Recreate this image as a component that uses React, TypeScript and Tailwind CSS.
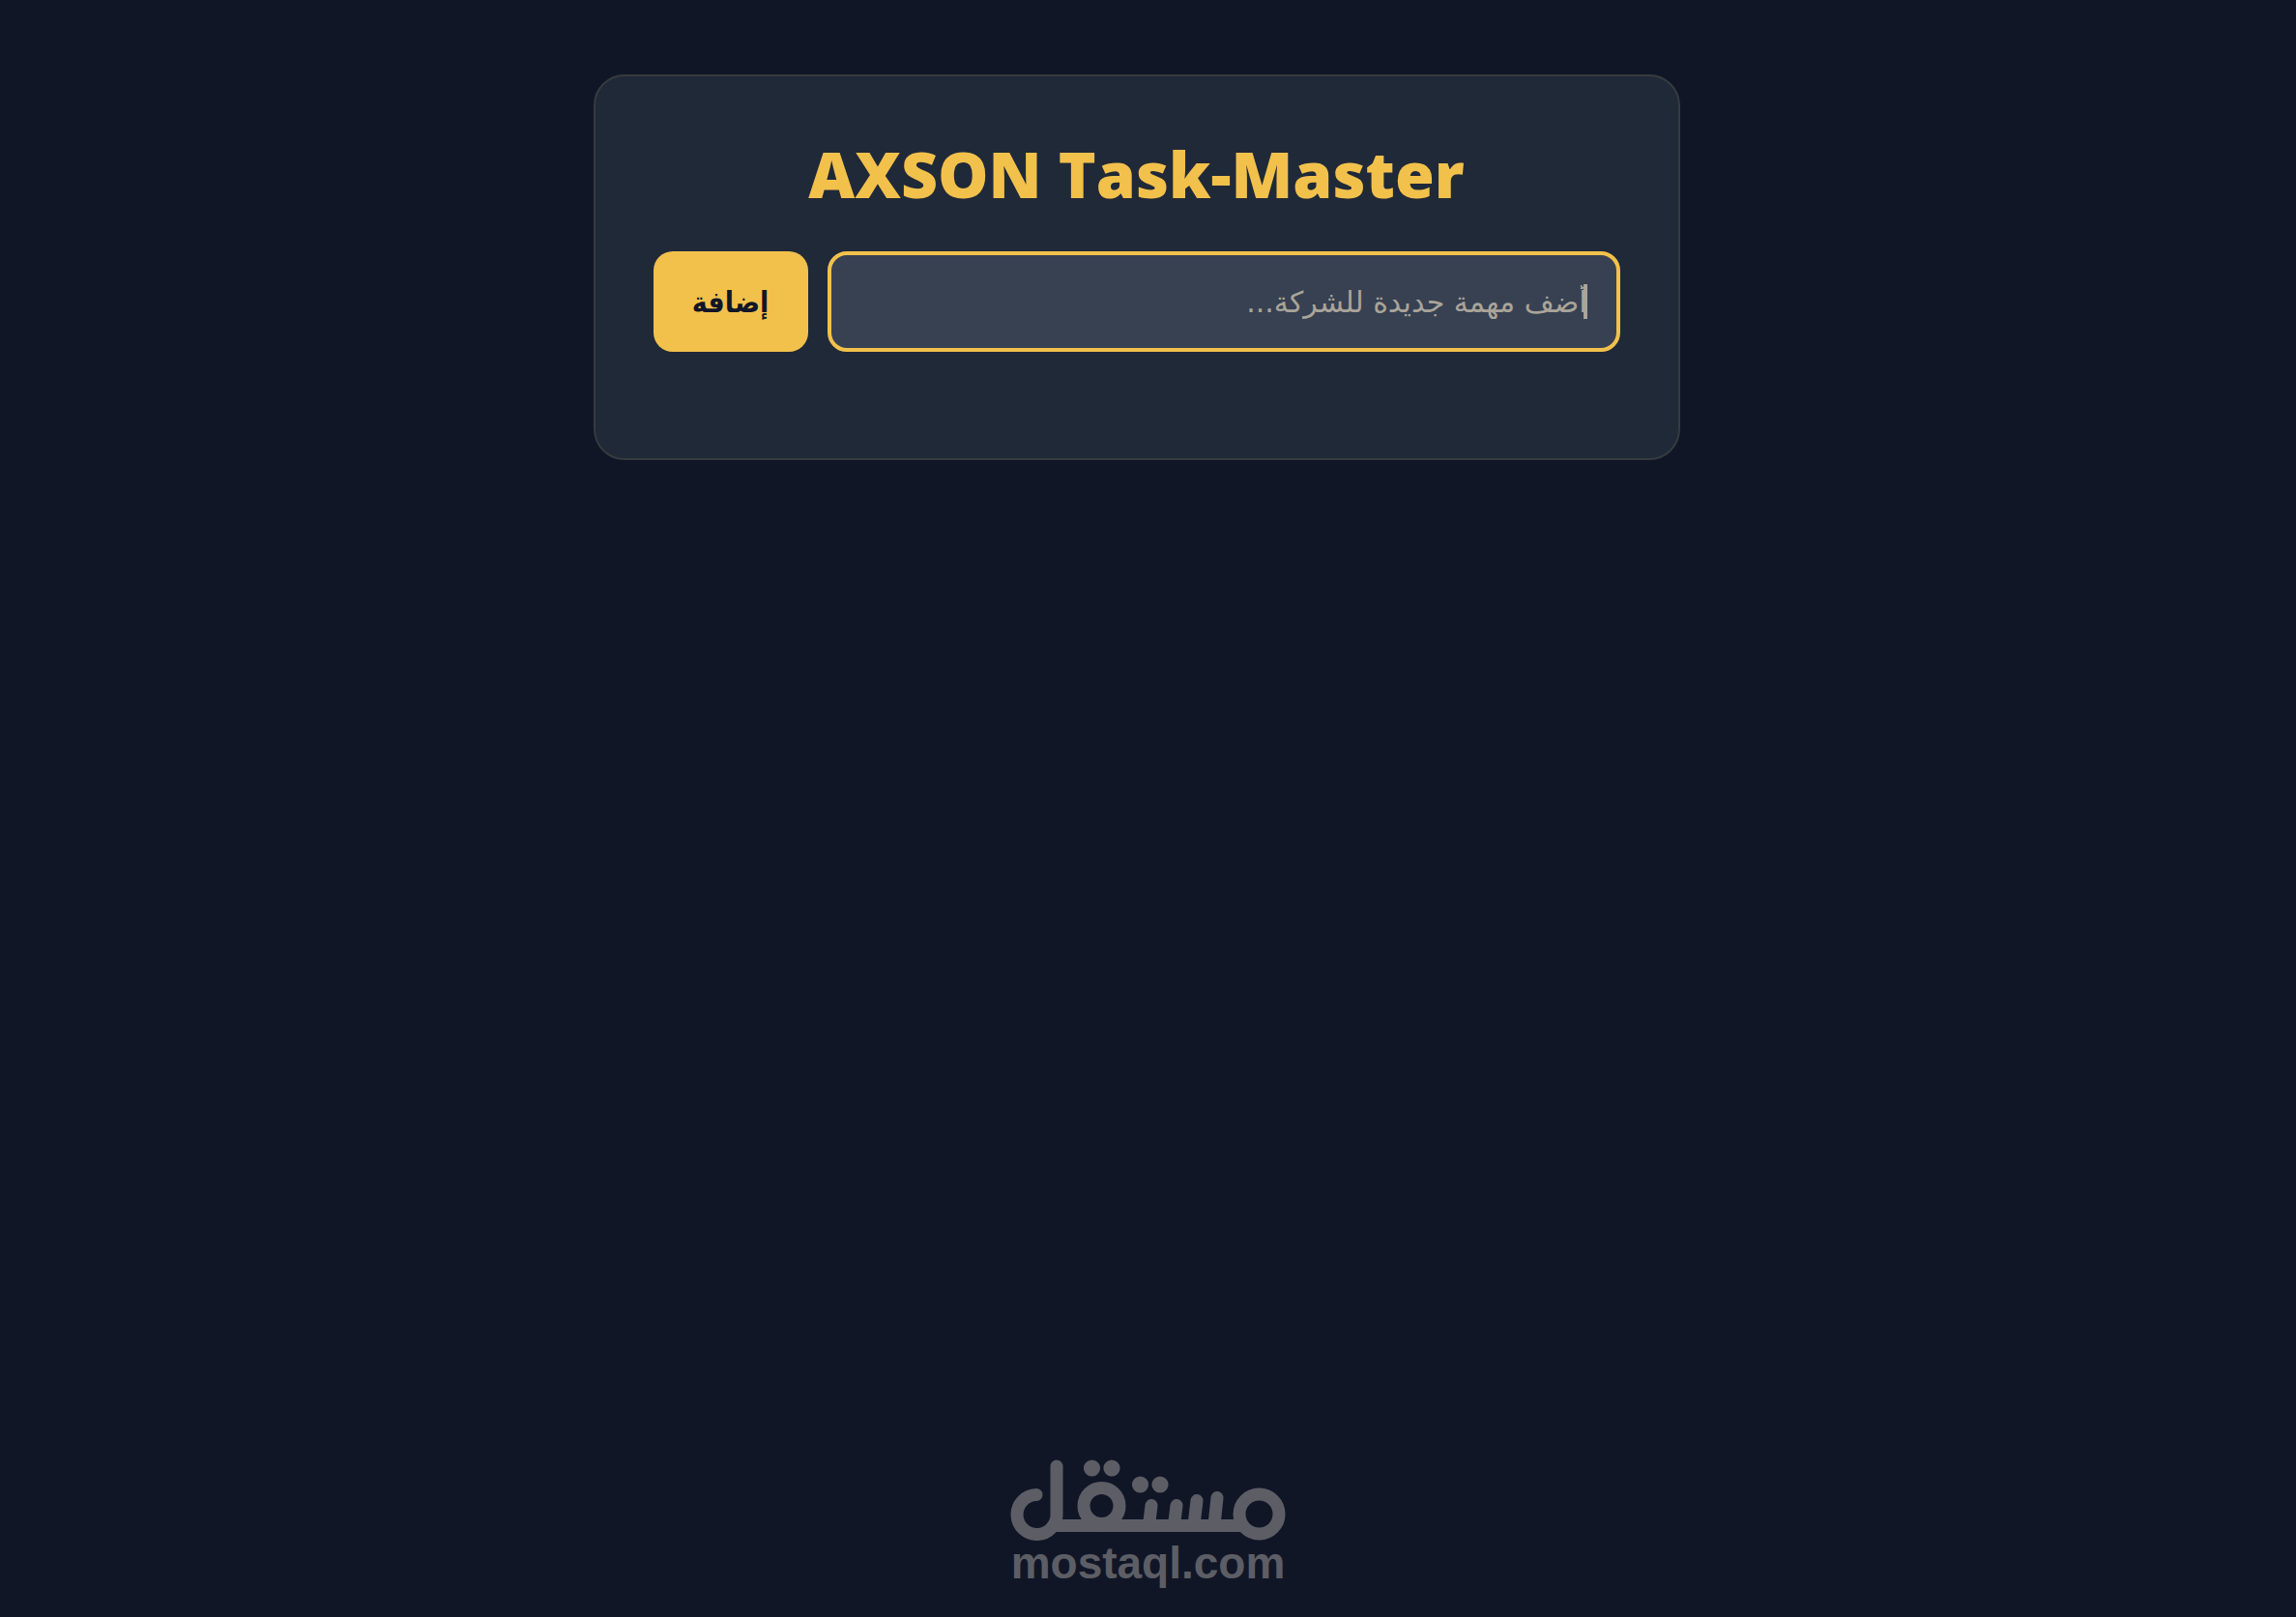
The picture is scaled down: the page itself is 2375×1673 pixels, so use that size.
import { useState } from "react";
import type { FormEvent } from "react";

// mostaql wordmark
function Logo() {
    return (
        <svg width="286" height="86" viewBox="0 0 286 86" fill="none" stroke="currentColor" strokeWidth="13" strokeLinecap="round" aria-hidden="true">
            <path d="M27 36.500A20.500 20.500 0 1 0 48 56V7" />
            <path d="M48 68.500H244" strokeLinecap="butt" />
            <circle cx="94.500" cy="48" r="18.500" />
            <circle cx="257.500" cy="56.500" r="20.500" />
            <path d="M146 47.500L143.500 68M172 47.500L169.500 68M193 42.500L190 68M214 39.500L211 68" />
            <g fill="currentColor" stroke="none">
                <circle cx="84.500" cy="9" r="8.600" />
                <circle cx="105" cy="9" r="8.600" />
                <circle cx="134.500" cy="26" r="8.600" />
                <circle cx="155" cy="26" r="8.600" />
            </g>
        </svg>
    );
}

export default function App() {
    const [tasks, setTasks] = useState<string[]>([]);
    const [text, setText] = useState("");

    const handleSubmit = (e: FormEvent) => {
        e.preventDefault();
        if (!text.trim()) return;
        setTasks([...tasks, text]);
        setText("");
    };

    return (
        <div dir="rtl" className="flex min-h-screen flex-col items-center bg-[#111627] font-['DejaVu_Sans',sans-serif]">
            <div className="flex w-full justify-center pt-[77px] pr-6">
                <main className="w-full max-w-[1124px] rounded-[32px] border-2 border-[#363b3f] bg-[#202938] px-[60px] pt-[60px] pb-[110px]">
                    <h1 dir="ltr" className="mb-10 text-center font-['Open_Sans',sans-serif] text-[66px] leading-[81px] font-extrabold text-[#f2c14c]">
                        AXSON Task-Master
                    </h1>

                    <form onSubmit={handleSubmit} className="flex gap-5">
                        <div className="relative flex-1">
                            <input
                                type="text"
                                aria-label="مهمة جديدة"
                                placeholder="أضف مهمة جديدة للشركة..."
                                value={text}
                                onChange={(e) => setText(e.target.value)}
                                className="h-[104px] w-full rounded-[20px] border-4 border-[#f2c14c] bg-[#374152] px-[30px] text-[30px] text-white outline-none placeholder:text-[#aaa499]"
                            />
                            {!text && <span className="absolute top-[34px] right-[34px] h-9 w-1 bg-[#aaa499]" />}
                        </div>
                        <button type="submit" className="h-[104px] w-[160px] rounded-[20px] bg-[#f2c14c] font-['DejaVu_Sans_Condensed',sans-serif] text-[30px] font-bold text-[#111627]">
                            إضافة
                        </button>
                    </form>

                    {tasks.length > 0 && (
                        <ul className="mt-10 space-y-5 text-[30px] text-white">
                            {tasks.map((task, i) => (
                                <li key={i}>{task}</li>
                            ))}
                        </ul>
                    )}
                </main>
            </div>

            <footer dir="ltr" className="mt-auto flex flex-col items-center pb-[35px] text-[#5d5e65]">
                <Logo />
                <p className="font-['Liberation_Sans',sans-serif] text-[46px] leading-[42px] font-bold">mostaql.com</p>
            </footer>
        </div>
    );
}
